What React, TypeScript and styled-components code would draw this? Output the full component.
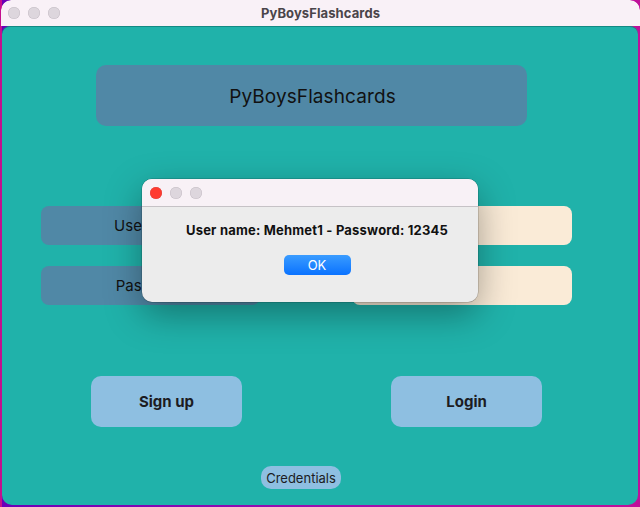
import React from "react";
import styled, { createGlobalStyle } from "styled-components";

const Global = createGlobalStyle`
  html, body { margin: 0; padding: 0; }
  body { font-family: Inter, "Noto Sans", "Liberation Sans", sans-serif; }
`;

const Desktop = styled.div`
  position: relative;
  width: 640px;
  height: 507px;
  overflow: hidden;
  background: linear-gradient(90deg, #6a00b8 0%, #9a10b0 50%, #c0109a 100%);
  box-shadow: inset 2px 0 0 #c4108e;
`;

const Window = styled.div`
  margin-left: 1px;
  width: 639px;
  height: 505px;
  display: flex;
  flex-direction: column;
  border-radius: 10px 10px 0 0;
  overflow: hidden;
`;

const TitleBar = styled.div`
  position: relative;
  height: 26px;
  flex: 0 0 26px;
  background: #f9f1f7;
  display: flex;
  align-items: center;
  justify-content: center;
  border-radius: 10px 10px 0 0;
`;

const Lights = styled.div<{ $left: number }>`
  position: absolute;
  left: ${(p) => p.$left}px;
  top: 50%;
  transform: translateY(-50%);
  display: flex;
  gap: 8px;
`;

const Light = styled.span<{ $color?: string }>`
  width: 12px;
  height: 12px;
  border-radius: 50%;
  background: ${(p) => p.$color ?? "#ddd6dd"};
  box-shadow: inset 0 0 0 0.5px ${(p) => (p.$color ? "#e0443e" : "#c4bcc4")};
`;

const WindowTitle = styled.span`
  font-size: 13px;
  font-weight: 700;
  color: #4a454a;
  letter-spacing: 0.1px;
`;

const Content = styled.div`
  flex: 1;
  background: #20b2aa;
  border-top: 1px solid #138a84;
  border-radius: 8px 8px 10px 10px;
  margin: 0 0 0 1px;
  width: 636px;
  display: flex;
  flex-direction: column;
  padding-top: 38px;
  box-sizing: border-box;
`;

const Header = styled.div`
  margin-left: 94px;
  width: 431px;
  height: 61px;
  border-radius: 10px;
  background: #5088a6;
  display: flex;
  align-items: center;
  justify-content: center;
  font-size: 19px;
  color: #111;
  letter-spacing: 0.1px;
  padding: 2px 0 0 2px;
  box-sizing: border-box;
`;

const Form = styled.div`
  margin: 80px 0 0 39px;
  display: grid;
  grid-template-columns: 219px 220px;
  grid-auto-rows: 39px;
  column-gap: 92px;
  row-gap: 21px;
`;

const Label = styled.div`
  border-radius: 8px;
  background: #5088a6;
  display: flex;
  align-items: center;
  justify-content: center;
  font-size: 15px;
  color: #111;
`;

const Input = styled.div`
  border-radius: 8px;
  background: #faebd7;
`;

const Buttons = styled.div`
  margin: 71px 0 0 89px;
  display: flex;
  gap: 149px;
`;

const BigButton = styled.div`
  width: 151px;
  height: 51px;
  border-radius: 10px;
  background: #8ebfe1;
  display: flex;
  align-items: center;
  justify-content: center;
  font-size: 15px;
  font-weight: 700;
  color: #1c1c22;
`;

const SmallButton = styled.div`
  margin: 39px 0 0 259px;
  width: 80px;
  height: 23px;
  border-radius: 10px;
  background: #8ebfe1;
  display: flex;
  align-items: center;
  justify-content: center;
  font-size: 13px;
  color: #1c1c22;
`;

const Dialog = styled.div`
  position: absolute;
  left: 142px;
  top: 179px;
  width: 336px;
  height: 123px;
  border-radius: 10px;
  background: #ececec;
  box-shadow: 0 0 0 0.5px rgba(0, 0, 0, 0.25), 0 12px 36px rgba(0, 0, 0, 0.35);
  overflow: hidden;
  display: flex;
  flex-direction: column;
`;

const DialogBar = styled.div`
  position: relative;
  height: 28px;
  flex: 0 0 28px;
  background: #f8f1f6;
  border-bottom: 1px solid #c6c2c6;
  box-sizing: border-box;
`;

const DialogBody = styled.div`
  display: flex;
  flex-direction: column;
  align-items: center;
  padding: 15px 0 0 14px;
`;

const Message = styled.div`
  font-size: 13px;
  font-weight: 700;
  color: #111;
  letter-spacing: 0.2px;
`;

const OkButton = styled.div`
  margin-top: 17px;
  width: 67px;
  height: 20px;
  border-radius: 5px;
  background: linear-gradient(180deg, #3a9cff 0%, #0a72ff 100%);
  color: #fff;
  font-size: 13px;
  display: flex;
  align-items: center;
  justify-content: center;
`;

export default function App() {
  return (
    <>
      <Global />
      <Desktop>
        <Window>
          <TitleBar>
            <Lights $left={7}>
              <Light />
              <Light />
              <Light />
            </Lights>
            <WindowTitle>PyBoysFlashcards</WindowTitle>
          </TitleBar>
          <Content>
            <Header>PyBoysFlashcards</Header>
            <Form>
              <Label>Username</Label>
              <Input />
              <Label>Password</Label>
              <Input />
            </Form>
            <Buttons>
              <BigButton>Sign up</BigButton>
              <BigButton>Login</BigButton>
            </Buttons>
            <SmallButton>Credentials</SmallButton>
          </Content>
        </Window>
        <Dialog>
          <DialogBar>
            <Lights $left={8}>
              <Light $color="#ff3b30" />
              <Light />
              <Light />
            </Lights>
          </DialogBar>
          <DialogBody>
            <Message>User name: Mehmet1 - Password: 12345</Message>
            <OkButton>OK</OkButton>
          </DialogBody>
        </Dialog>
      </Desktop>
    </>
  );
}
